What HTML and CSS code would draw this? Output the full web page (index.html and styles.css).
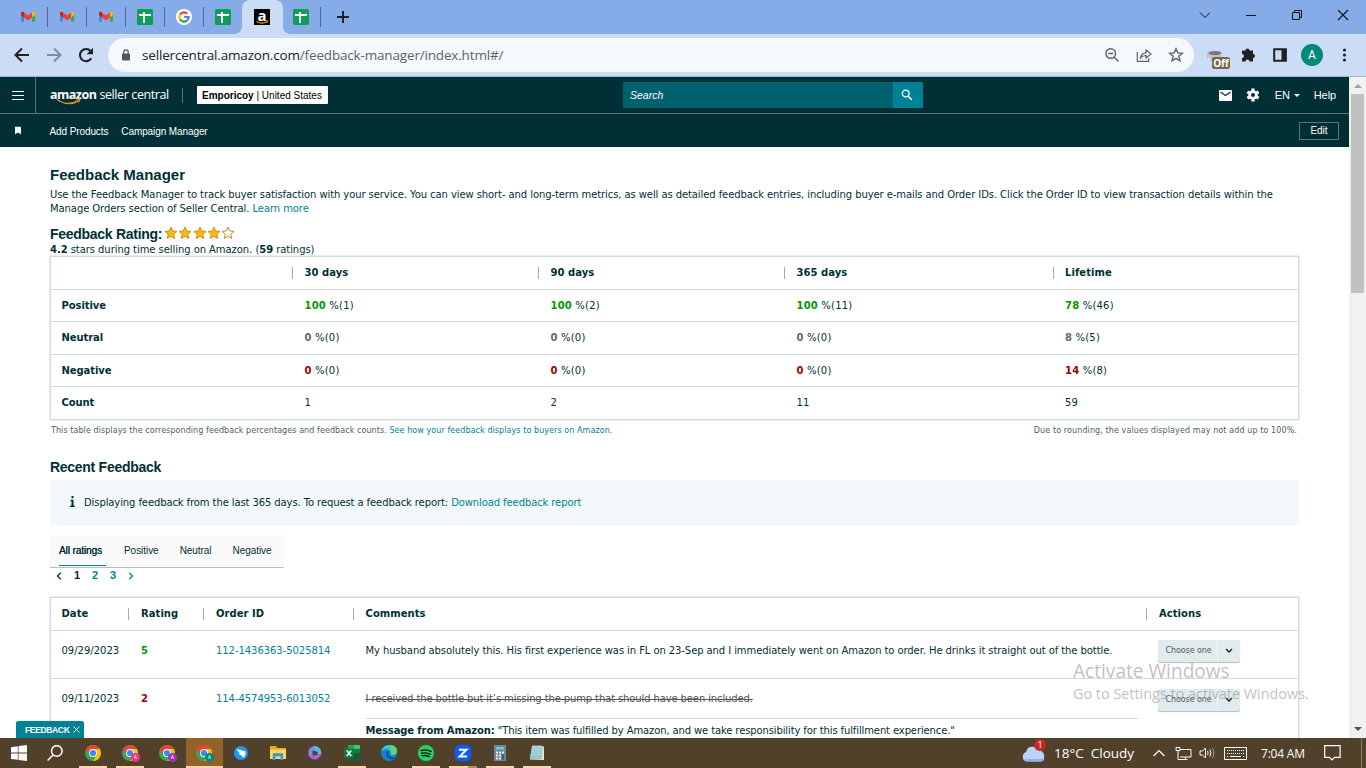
FILE: index.html
```html
<!DOCTYPE html>
<html lang="en">
<head>
<meta charset="utf-8">
<title>Feedback Manager</title>
<link rel="stylesheet" href="styles.css">
</head>
<body>
<svg class="defs" width="0" height="0">
  <symbol id="gmail" viewBox="0 0 16 16"><path d="M1 3.500v9.200h3V7z" fill="#4285f4"/><path d="M15 3.500v9.200h-3V7z" fill="#34a853"/><path d="M12 4.200 13 3q2-1 2 1.500V6l-3 2.500z" fill="#fbbc04"/><path d="M1 6V4q.3-2 2.300-1L8 6.500 12 3.600v4.800l-4 3-4-3z" fill="#ea4335"/><path d="M1 6V4q.3-2 2.300-1L4 3.600v4.800z" fill="#c5221f"/></symbol>
  <symbol id="sheet" viewBox="0 0 16 16"><rect width="16" height="16" rx="1.500" fill="#0f9d58"/><path d="M2 6h12M7 3v11" stroke="#fff" stroke-width="2"/></symbol>
  <symbol id="google" viewBox="0 0 16 16"><circle cx="8" cy="8" r="8" fill="#fff"/><g fill="none" stroke-width="2.200"><path d="M11.300 4.600A4.700 4.700 0 0 0 4 5.600" stroke="#ea4335"/><path d="M4 5.600a4.700 4.700 0 0 0 0 4.800" stroke="#fbbc05"/><path d="M4 10.400a4.700 4.700 0 0 0 7.200 1" stroke="#34a853"/><path d="M11.200 11.400A4.700 4.700 0 0 0 12.700 8H8.200" stroke="#4285f4"/></g></symbol>
  <symbol id="chrome" viewBox="0 0 16 16"><circle cx="8" cy="8" r="8" fill="#34a853"/><path d="M1.100 4A8 8 0 0 1 14.900 4H8L4.500 10z" fill="#ea4335"/><path d="M8 4h6.900A8 8 0 0 1 8 16l3.500-6z" fill="#fbbc05"/><circle cx="8" cy="8" r="4" fill="#fff"/><circle cx="8" cy="8" r="3.100" fill="#4285f4"/></symbol>
  <symbol id="star" viewBox="0 0 14 14"><path d="M7 1l1.700 4 4.300.4-3.200 2.900.9 4.200L7 10.300l-3.700 2.200.9-4.200L1 5.400 5.300 5z" stroke="#cf8d1a" stroke-width="1" stroke-linejoin="round"/></symbol>
</svg>

<header class="tabstrip">
  <div class="tab"><svg><use href="#gmail"/></svg></div>
  <div class="tab"><svg><use href="#gmail"/></svg></div>
  <div class="tab"><svg><use href="#gmail"/></svg></div>
  <div class="tab"><svg><use href="#sheet"/></svg></div>
  <div class="tab"><svg><use href="#google"/></svg></div>
  <div class="tab last"><svg><use href="#sheet"/></svg></div>
  <div class="tab active"><span class="a-icon">a<svg viewBox="0 0 16 16"><path d="M2.500 12.400q5.500 3.200 10 .4M11.500 12.300l2-.3-.5 1.700" fill="none" stroke="#f90" stroke-width="1.200"/></svg></span></div>
  <div class="tab"><svg><use href="#sheet"/></svg></div>
  <svg class="plus" viewBox="0 0 14 14"><path d="M7 1v12M1 7h12" stroke="#202124" stroke-width="2"/></svg>
  <div class="window-buttons">
    <svg viewBox="0 0 12 12"><path d="M1 3.500l5 5 5-5" fill="none" stroke="#111"/></svg>
    <svg viewBox="0 0 12 12"><path d="M1 6.500h10" stroke="#111"/></svg>
    <svg viewBox="0 0 12 12"><path d="M1.500 3.500h7v7h-7zM3.500 3.500v-2h7v7h-2" fill="none" stroke="#111"/></svg>
    <svg viewBox="0 0 12 12"><path d="M1 1l10 10M11 1L1 11" stroke="#111" stroke-width="1.100"/></svg>
  </div>
</header>

<div class="toolbar">
  <div class="nav-buttons">
    <svg viewBox="0 0 20 20"><path d="M17 10H4M10 3.500L3.500 10l6.500 6.500" fill="none" stroke="#202124" stroke-width="2"/></svg>
    <svg viewBox="0 0 20 20"><path d="M3 10h13M10 3.500l6.500 6.500-6.500 6.500" fill="none" stroke="#858b99" stroke-width="2"/></svg>
    <svg viewBox="0 0 20 20"><path d="M15.300 13.300A6.100 6.100 0 1 1 14.600 6" fill="none" stroke="#202124" stroke-width="2.100"/><path d="M17 2.800v6.400h-6.400z" fill="#202124"/></svg>
  </div>
  <div class="omnibox">
    <svg class="lock" viewBox="0 0 10 12"><rect x="1" y="4.500" width="8" height="7" rx="1" fill="#50555b"/><path d="M2.800 5V3a2.200 2.200 0 0 1 4.400 0v2" fill="none" stroke="#50555b" stroke-width="1.200"/></svg>
    <span class="url">sellercentral.amazon.com<i>/feedback-manager/index.html#/</i></span>
    <div class="omni-icons">
      <svg viewBox="0 0 16 16" fill="none" stroke="#5f6368" stroke-width="1.400"><circle cx="6.700" cy="6.500" r="4.800"/><path d="M10.300 10.200L14.500 14.500M4.300 6.500h4.800"/></svg>
      <svg viewBox="0 0 16 16" fill="none" stroke="#5f6368" stroke-width="1.200"><path d="M1.300 5v9.300h11.400V11"/><path d="M4.500 11Q5 6 10 5.800V3l5 4-5 4V8.500Q6.500 8.300 4.500 11z"/></svg>
      <svg viewBox="0 0 16 16" fill="none" stroke="#5f6368" stroke-width="1.400"><path d="M8 1.800l1.800 4.100 4.600.4-3.500 3 1.100 4.500L8 11.400l-4 2.400 1.100-4.500-3.500-3 4.600-.4z"/></svg>
    </div>
  </div>
  <div class="extensions">
    <div class="ext"><svg viewBox="0 0 20 20"><path d="M2 6q6-3 15 0l-1 3-1 5H6L4.500 9 2 12z" fill="#c2c3c7"/><ellipse cx="10" cy="6" rx="6.500" ry="2" fill="#777"/></svg><b>Off</b></div>
    <svg viewBox="0 0 16 16" fill="#202124"><path d="M2 4h3.500a2 2 0 1 1 4 0H13v3.500a2 2 0 0 1 0 4V15H9.500a2 2 0 0 0-4 0H2v-3.500a2 2 0 0 0 0-4z" transform="translate(0 -.5)"/></svg>
    <svg viewBox="0 0 16 16"><path d="M2.200 2.200h11.600v11.600H2.200z" fill="none" stroke="#202124" stroke-width="2"/><path d="M9.500 2h5v12h-5z" fill="#202124"/></svg>
    <span class="avatar">A</span>
    <svg viewBox="0 0 16 16" fill="#202124"><circle cx="8.500" cy="3" r="1.600"/><circle cx="8.500" cy="8" r="1.600"/><circle cx="8.500" cy="13" r="1.600"/></svg>
  </div>
</div>

<div class="viewport">
<div class="page">
  <div class="sc-header">
    <div class="burger"><svg viewBox="0 0 12 10"><path d="M0 1.500h12M0 5.500h12M0 9.500h12" stroke="#fff" stroke-width="1"/></svg></div>
    <div class="logo"><b>amazon</b><span>seller central</span><svg viewBox="0 0 26 8"><path d="M1 1.500Q12 9 23 2.500" fill="none" stroke="#f0921e" stroke-width="1.500"/><path d="M20 1.300l4-.5-1.200 3.600" fill="none" stroke="#f0921e" stroke-width="1.100"/></svg></div>
    <div class="account"><b>Emporicoy</b> | United States</div>
    <div class="search"><span>Search</span><div><svg viewBox="0 0 12 12" fill="none" stroke="#fff"><circle cx="4.700" cy="4.500" r="3.400" stroke-width="1.300"/><path d="M7.200 7.200l3.600 3.600" stroke-width="1.600"/></svg></div></div>
    <div class="sc-right">
      <svg class="mail" viewBox="0 0 13 11"><rect width="13" height="11" rx="1" fill="#fff"/><path d="M1.500 2l5 3.500 5-3.500" fill="none" stroke="#002f36" stroke-width="1.200"/></svg>
      <svg class="gear" viewBox="0 0 14 14"><g stroke="#fff" stroke-width="3.200"><path d="M7 .5v13M1.400 3.800l11.200 6.400M12.600 3.800L1.400 10.200"/></g><circle cx="7" cy="7" r="4.700" fill="#fff"/><circle cx="7" cy="7" r="2" fill="#002f36"/></svg>
      <span class="lang">EN</span><i class="caret"></i><span class="help">Help</span>
    </div>
  </div>
  <nav class="sc-nav">
    <svg viewBox="0 0 7 9"><path d="M0 0h7v9L3.500 6.800 0 9z" fill="#fff"/></svg>
    <span class="n1">Add Products</span><span class="n2">Campaign Manager</span><button>Edit</button>
  </nav>

  <main>
    <h1>Feedback Manager</h1>
    <p class="intro"><span>Use the Feedback Manager to track buyer satisfaction with your service. You can view short- and long-term metrics, as well as detailed feedback entries, including buyer e-mails and Order IDs. Click the Order ID to view transaction details within the</span><br><span>Manage Orders section of Seller Central. <a>Learn more</a></span></p>
    <div class="rating"><h2>Feedback Rating:</h2><svg fill="#ffb90b"><use href="#star"/></svg><svg fill="#ffb90b"><use href="#star"/></svg><svg fill="#ffb90b"><use href="#star"/></svg><svg fill="#ffb90b"><use href="#star"/></svg><svg fill="#fff"><use href="#star"/></svg></div>
    <p class="stars"><b>4.2</b> stars during time selling on Amazon. (<b>59</b> ratings)</p>

    <section class="card summary">
      <div class="row head"><span></span><b>30 days</b><b>90 days</b><b>365 days</b><b>Lifetime</b></div>
      <div class="row pos short"><b>Positive</b><span><b>100</b> %(1)</span><span><b>100</b> %(2)</span><span><b>100</b> %(11)</span><span><b>78</b> %(46)</span></div>
      <div class="row neu"><b>Neutral</b><span><b>0</b> %(0)</span><span><b>0</b> %(0)</span><span><b>0</b> %(0)</span><span><b>8</b> %(5)</span></div>
      <div class="row neg short"><b>Negative</b><span><b>0</b> %(0)</span><span><b>0</b> %(0)</span><span><b>0</b> %(0)</span><span><b>14</b> %(8)</span></div>
      <div class="row short"><b>Count</b><span>1</span><span>2</span><span>11</span><span>59</span></div>
    </section>
    <div class="note"><span>This table displays the corresponding feedback percentages and feedback counts. <a>See how your feedback displays to buyers on Amazon.</a></span><span>Due to rounding, the values displayed may not add up to 100%.</span></div>

    <h2 class="recent">Recent Feedback</h2>
    <div class="info"><svg viewBox="0 0 5 11"><path d="M1.500 0h2v2.200h-2zM.5 3.800h3v5.700h1.200V11H.2V9.500h1.300V5.300h-1z" fill="#002f36"/></svg><span>Displaying feedback from the last 365 days. To request a feedback report: <a>Download feedback report</a></span></div>
    <div class="filters"><span class="on">All ratings</span><span>Positive</span><span>Neutral</span><span>Negative</span></div>
    <div class="pager"><svg viewBox="0 0 6 8"><path d="M4.800.7L1.500 4l3.300 3.300" fill="none" stroke="#002f36" stroke-width="1.300"/></svg><b>1</b><b class="lnk">2</b><b class="lnk">3</b><svg viewBox="0 0 6 8"><path d="M1.200.7L4.500 4 1.200 7.300" fill="none" stroke="#008296" stroke-width="1.300"/></svg></div>

    <section class="card entries">
      <div class="row head"><b>Date</b><b>Rating</b><b>Order ID</b><b>Comments</b><b>Actions</b></div>
      <div class="row entry pos"><span class="date">09/29/2023</span><span><b>5</b></span><a>112-1436363-5025814</a><span>My husband absolutely this. His first experience was in FL on 23-Sep and I immediately went on Amazon to order. He drinks it straight out of the bottle.</span>
        <div class="choose"><span>Choose one</span><svg viewBox="0 0 8 6"><path d="M1 1l3 3 3-3" fill="none" stroke="#002f36" stroke-width="1.400"/></svg></div></div>
      <div class="row entry tall neg"><span class="date">09/11/2023</span><span><b>2</b></span><a>114-4574953-6013052</a><div class="comment"><s>I received the bottle but it’s missing the pump that should have been included.</s><p><b>Message from Amazon:</b> "This item was fulfilled by Amazon, and we take responsibility for this fulfillment experience."</p></div>
        <div class="choose"><span>Choose one</span><svg viewBox="0 0 8 6"><path d="M1 1l3 3 3-3" fill="none" stroke="#002f36" stroke-width="1.400"/></svg></div></div>
    </section>
  </main>
</div>
<div class="scrollbar"><i class="up"></i><div class="thumb"></div><i class="down"></i></div>
</div>

<div class="feedback-tab"><span>FEEDBACK</span><svg viewBox="0 0 7 7"><path d="M.5.5l6 6M6.500.5l-6 6" stroke="#fff"/></svg></div>
<div class="watermark"><div>Activate Windows</div><p>Go to Settings to activate Windows.</p></div>

<footer class="taskbar">
  <div class="task"><svg viewBox="0 0 16 16" fill="#fff"><path d="M0 2.200L6.800 1.200v6.400H0zM7.500 1.100L16 0v7.600H7.500zM0 8.400h6.800v6.400L0 13.900zM7.500 8.400H16V16l-8.500-1.100z"/></svg></div>
  <div class="task"><svg viewBox="0 0 16 16" fill="none" stroke="#fff" stroke-width="1.500"><circle cx="9.800" cy="6" r="5.300"/><path d="M6 9.900L.6 15.500"/></svg></div>
  <div class="task run"><svg><use href="#chrome"/></svg></div>
  <div class="task run"><svg><use href="#chrome"/></svg><em class="pink">A</em></div>
  <div class="task"><svg><use href="#chrome"/></svg><em class="purple">A</em></div>
  <div class="task current"><svg><use href="#chrome"/></svg><em class="teal">A</em></div>
  <div class="task"><svg viewBox="0 0 16 16"><circle cx="8" cy="8" r="7" fill="#2196f3"/><path d="M3.500 4l8.800 2.300q.8 4-1.800 6.700L8.700 10.500 6.500 9.800 6.300 8z" fill="#fff"/></svg></div>
  <div class="task"><svg viewBox="0 0 16 16"><path d="M0 1h6l1.500 2H16v11H0z" fill="#e6a817"/><path d="M0 4.500h16V14H0z" fill="#ffd75e"/><path d="M2.800 15V8.300h10.400V15h-2.700v-3.800H5.500V15z" fill="#3d94d9"/></svg></div>
  <div class="task"><svg viewBox="0 0 16 16"><path d="M7 1Q1.500 3 1.500 6v4.500L5.500 11V6.500q2-1.500 4-5z" fill="#8a86e8"/><path d="M7 1q3-.6 5.500 2 2 2 2 5.500-.5 2.500-3.800 3.500V7Q8 6.500 6.800 5z" fill="#56b6ec"/><path d="M1.500 9q2 1.800 5 1.600 4-.4 8-2.100-.5 3-3 4.600-3 2.400-6 1Q1.500 12.500 1.500 9z" fill="#a566d0"/></svg></div>
  <div class="task run"><svg viewBox="0 0 16 16"><path d="M4 0h6v16H4z" fill="#21a366"/><path d="M10 0h6v4h-6z" fill="#33c481"/><path d="M10 4h6v4h-6zM4 4h6v4H4z" fill="#107c41"/><path d="M10 8h6v8H4V8z" fill="#185c37"/><rect y="3.500" width="10" height="9.500" rx="1" fill="#107c41"/><path d="M2.800 5.500l4.400 5.500M7.200 5.500L2.800 11" stroke="#fff" stroke-width="1.500"/></svg></div>
  <div class="task"><svg viewBox="0 0 16 16"><circle cx="8" cy="8" r="8" fill="#1480d0"/><path d="M.2 6.500Q1.500 0 8 0q8 0 8 6.300-.5 3.800-5 3.700-2 0-1-2Q9 4.500 5.500 4.300 2 4.300.2 6.500z" fill="#36c5d8"/><path d="M9 .1q7 .6 7 6.300-.5 3.600-5 3.600-2 0-1-2z" fill="#5bd67a"/><path d="M5.600 7q-1 5.500 4.800 7.500 2.600 0 4.500-2.500Q10 13.500 7.500 10.500 6 8.500 8 6.300q-1.700-.2-2.400.7z" fill="#0c4b94"/></svg></div>
  <div class="task run"><svg viewBox="0 0 16 16"><circle cx="8" cy="8" r="8" fill="#1ed760"/><path d="M3 5.600q5.500-1.500 10.200 1M3.500 8.300q5-1.300 8.800 1M4 10.800q4-1 7.300.8" fill="none" stroke="#111" stroke-width="1.400" stroke-linecap="round"/></svg></div>
  <div class="task run split"><svg viewBox="0 0 16 16"><rect width="16" height="16" rx="4.500" fill="#0b5cff"/><path d="M4 4.700h7.500L4.700 11.400h7.300" fill="none" stroke="#fff" stroke-width="2"/></svg></div>
  <div class="task run"><svg viewBox="0 0 16 16"><rect x="2" width="12" height="16" fill="#78828c"/><path d="M4 2h8v2.500H4z" fill="#52d3f5"/><path d="M4 6.500h2v2H4zM7 6.500h2v2H7zM10 6.500h2v2h-2zM4 9.500h2v2H4zM7 9.500h2v2H7zM4 12.500h2v2H4zM7 12.500h2v2H7z" fill="#eee"/><path d="M10 9.500h2v5h-2z" fill="#1565a8"/></svg></div>
  <div class="task run"><svg viewBox="0 0 16 16"><path d="M3 1.500h12V15l-14-.5z" fill="#e9e2c5"/><path d="M3 1.500h11l-1.500 12.500H.8z" fill="#8fc7d0"/><path d="M3 4.500h10M2.500 7h10M2.200 9.500h10" stroke="#b9e2e6" stroke-width=".8"/><path d="M4 .3v2.500M6 .3v2.500M8 .3v2.500M10 .3v2.500M12 .3v2.500" stroke="#e8eeee"/></svg></div>
  <div class="tray">
    <div class="cloud"><svg viewBox="0 0 26 18"><path d="M5.500 17.500a5 5 0 0 1-.5-9.500 6.500 6.500 0 0 1 12.300-1.500A5.800 5.800 0 0 1 20 17.500z" fill="#bcd3f8"/><path d="M5.500 17.500a5 5 0 0 1-3-2.500h21a5 5 0 0 1-3.500 2.500z" fill="#8db2ee"/></svg><em>1</em></div>
    <span class="weather">18°C&nbsp; Cloudy</span>
    <svg class="chev" viewBox="0 0 12 8"><path d="M.6 7L6 1.500 11.400 7" fill="none" stroke="#fff" stroke-width="1.200"/></svg>
    <svg class="net" viewBox="0 0 17 15"><path d="M5 3.500h11v7.500H5M10.500 11v2.500M4.500 13.500h8M1 1.500h4v3H1zM3 4.500v9h2" fill="none" stroke="#fff"/></svg>
    <svg class="vol" viewBox="0 0 17 14" fill="none" stroke="#fff"><path d="M1 5h2.500l3-3v10l-3-3H1zM8.500 5q1.300 2 0 4M10.800 3.500q2.400 3.500 0 7"/><path d="M13.300 2q3.300 5 0 10" opacity=".5"/></svg>
    <svg class="kbd" viewBox="0 0 23 13"><path d="M.5.5h22v12H.5z" fill="none" stroke="#fff"/><path d="M3 3.500h17M3 6.500h17" stroke="#fff" stroke-dasharray="1 1"/><path d="M6 9.500h11M3 9.500h1M19 9.500h1" stroke="#fff"/></svg>
    <span class="clock">7:04 AM</span>
    <svg class="msg" viewBox="0 0 17 16"><path d="M.7.700h15.400v11.600H10.500l-2.500 2.500-2.500-2.500H.7z" fill="none" stroke="#fff" stroke-width="1.200"/></svg>
    <i class="peek"></i>
  </div>
</footer>
</body>
</html>
```
FILE: styles.css
```css
* { box-sizing: border-box; }
body { margin: 0; width: 1366px; height: 768px; overflow: hidden; display: flex; flex-direction: column; position: relative; background: #fff; color: #002f36; font: 10px "DejaVu Sans", Verdana, sans-serif; white-space: nowrap; }
h1, h2, p { margin: 0; }
svg { display: block; flex: none; }
.defs { position: absolute; }
a { color: #008296; }

.tabstrip { height: 34px; flex: none; background: #85ace9; display: flex; align-items: center; padding-left: 9px; }
.tab { width: 39px; height: 34px; display: flex; align-items: center; justify-content: center; position: relative; padding-right: 1px; }
.tab svg { width: 16px; height: 16px; }
.tab::after { content: ""; position: absolute; right: 0; top: 7px; width: 1px; height: 20px; background: #536b93; }
.tab.last::after { display: none; }
.tab.active { width: 41px; margin: 0 -1px; background: #cbdcf6; border-radius: 8px 8px 0 0; }
.tab.active::before, .tab.active::after { content: ""; position: absolute; top: auto; right: auto; bottom: 0; left: -7px; width: 7px; height: 7px; background: radial-gradient(circle at 0 0, #85ace9 6.500px, #cbdcf6 7px); }
.tab.active::after { left: 41px; background: radial-gradient(circle at 100% 0, #85ace9 6.500px, #cbdcf6 7px); }
.a-icon { width: 16px; height: 16px; background: #000; color: #fff; font: bold 15px/12px "Open Sans", sans-serif; text-align: center; position: relative; }
.a-icon svg { position: absolute; left: 0; top: 0; }
.plus { width: 14px; height: 14px; margin-left: 15px; }
.window-buttons { margin-left: auto; display: flex; gap: 34px; padding-right: 17px; margin-top: -5px; }
.window-buttons svg { width: 12px; height: 12px; }

.toolbar { height: 43px; flex: none; background: #cbdcf6; border-bottom: 1px solid #a5b5d1; display: flex; align-items: center; }
.nav-buttons { width: 108px; display: flex; gap: 12px; padding-left: 12px; }
.nav-buttons svg { width: 20px; height: 20px; }
.omnibox { width: 1086px; height: 34px; border-radius: 17px; background: #f5f8fd; display: flex; align-items: center; padding: 0 2px 0 13px; }
.lock { width: 10px; height: 12px; margin-right: 11px; }
.url { font: 13.500px "Open Sans", sans-serif; color: #202124; letter-spacing: -.17px; }
.url i { font-style: normal; color: #5f6368; }
.omni-icons { margin-left: auto; display: flex; }
.omni-icons svg { width: 16px; height: 16px; margin: 0 8px; }
.extensions { margin-left: auto; padding-right: 6px; display: flex; align-items: center; }
.extensions svg { width: 16px; height: 16px; margin: 0 8px; }
.ext { width: 32px; height: 24px; position: relative; }
.ext svg { width: 20px; height: 20px; margin: 4px 5px; }
.ext b { position: absolute; left: 12px; top: 14px; width: 18px; height: 12px; border-radius: 2px; background: #7d674a; color: #fff; font: bold 10px/12px "Open Sans", sans-serif; text-align: center; }
.avatar { width: 22px; height: 22px; margin: 0 5px; border-radius: 50%; background: #00897b; color: #fff; font: 12px/22px Roboto, sans-serif; text-align: center; }

.viewport { height: 661px; flex: none; display: flex; }
.page { width: 1349px; overflow: hidden; }
.sc-header { height: 37px; background: #002f36; border-bottom: 1px solid #5a757a; color: #fff; display: flex; align-items: center; font-family: "Liberation Sans", Arial, sans-serif; }
.burger { width: 36px; height: 36px; border-right: 1px solid #5a757a; padding: 13px 0 0 12px; }
.burger svg { width: 12px; height: 10px; }
.logo { width: 147px; height: 20px; position: relative; padding-left: 14px; font: 12.500px/19px "Open Sans", sans-serif; display: flex; gap: 3px; }
.logo b { letter-spacing: -.5px; }
.logo span { letter-spacing: -.4px; }
.logo::after { content: ""; position: absolute; right: 0; top: 3px; height: 15px; width: 1px; background: #5a757a; }
.logo svg { position: absolute; left: 20px; top: 13px; width: 26px; height: 8px; }
.account { width: 131px; height: 18px; margin-left: 14px; border-radius: 1px; background: #fff; color: #000; font-size: 10px; line-height: 19px; padding-left: 5px; }
.search { margin-left: 295px; width: 300px; height: 26px; background: #00616e; display: flex; align-items: center; justify-content: space-between; padding-left: 7px; font-size: 10.500px; font-style: italic; }
.search div { width: 30px; height: 26px; background: #008296; padding: 7px 8px; }
.search svg { width: 12px; height: 12px; }
.sc-right { margin-left: auto; padding-right: 13px; display: flex; align-items: center; font-size: 11px; letter-spacing: -.1px; }
.mail { width: 13px; height: 11px; margin-right: 14px; }
.gear { width: 14px; height: 14px; margin-right: 15px; }
.caret { border: 3px solid transparent; border-top-color: #fff; margin: 3px 14px 0 4px; }
.sc-nav { height: 33px; background: #002f36; color: #fff; display: flex; align-items: center; font: 10px "Liberation Sans", Arial, sans-serif; padding: 0 10px 0 15px; letter-spacing: -.1px; }
.sc-nav svg { width: 6px; height: 9px; margin-right: 28.500px; }
.sc-nav span { padding-top: 2px; }
.n1 { margin-right: 13px; }
.sc-nav button { margin-left: auto; width: 40px; height: 18px; padding: 0; border: 1px solid #5a757a; background: none; color: #fff; font: inherit; }

main { padding: 19px 50px 0; letter-spacing: -.085px; }
h1, h2 { font: bold 14px/18px "Liberation Sans", Arial, sans-serif; letter-spacing: -.28px; }
h1 { font-size: 15px; letter-spacing: 0; }
.intro { line-height: 14px; margin-top: 4px; }
.rating { display: flex; height: 18px; margin-top: 9px; align-items: center; }
.rating h2 { width: 114px; }
.rating svg { width: 14px; height: 14px; margin: -2px .3px 0 0; }
.stars { line-height: 12px; margin-top: 1px; letter-spacing: -.06px; }
.card { width: 1249px; border: 1px solid #d5dbdb; box-shadow: 0 0 2px #c8cece; }
.row { display: grid; align-items: center; }
.summary { height: 164px; }
.summary .row { grid-template-columns: 253.500px 246px 246px 268.500px 1fr; height: 33px; border-bottom: 1px solid #d5dbdb; padding-bottom: 1px; }
.summary .row.short { height: 32px; padding-bottom: 0; }
.summary .row:last-child { border: 0; padding-bottom: 1px; }
.row > :first-child { padding-left: 10.500px; }
.head b { position: relative; letter-spacing: .05px; }
.head b:not(:first-child)::before { content: ""; position: absolute; left: -12.500px; top: 0; width: 1px; height: 12px; background: #a2afb1; }
.entries .head b:not(:first-child)::before { left: -13px; }
.summary .row > span { letter-spacing: .2px; }
.pos span b { color: #090; }
.neu span b { color: #666; }
.neg span b { color: #900; }
.note { height: 20px; display: flex; justify-content: space-between; font-size: 8px; line-height: 21px; padding: 0 2px 0 1px; letter-spacing: .075px; color: #4b5f63; }
.note span + span { letter-spacing: .1px; }
.recent { margin-top: 18px; }
.info { height: 45px; margin-top: 4px; width: 1249px; background: #f3f8fa; display: flex; align-items: center; padding-left: 20px; letter-spacing: -.1px; }
.info svg { width: 5px; height: 11px; margin-right: 9px; margin-top: -2px; }
.filters { width: 234px; height: 33px; margin-top: 10px; background: #fafafa; border-bottom: 1px solid #bbbfbf; display: flex; padding-left: 9px; font: 10px/31px "Liberation Sans", Arial, sans-serif; }
.filters span { margin-right: 21px; flex: none; letter-spacing: -.05px; }
.filters .on { width: 47px; height: 31px; margin-right: 18px; border-bottom: 1px solid #008296; text-shadow: .3px 0 #002f36; letter-spacing: -.1px; }
.pager { height: 16px; display: flex; align-items: center; padding-left: 6px; font: bold 11px "Liberation Sans", Arial, sans-serif; padding-bottom: 2px; }
.pager svg { width: 6px; height: 8px; margin-top: 2px; }
.pager b { width: 6px; margin-left: 12px; }
.pager svg:last-child { margin-left: 12px; }
.lnk { color: #008296; }
.entries { margin-top: 13px; height: 170px; }
.entries .row { grid-template-columns: 90px 75px 149.500px 793.500px 1fr; border-bottom: 1px solid #d5dbdb; }
.entries .head { height: 33px; padding-bottom: 1px; }
.entries .entry { height: 48px; padding-bottom: 8px; }
.entries .entry.tall { height: 120px; align-items: start; padding-top: 14px; }
.entry .date { letter-spacing: 0; }
.entry > a { letter-spacing: -.05px; }
.choose { margin: 1px 0 0 -1.500px; width: 82px; height: 22px; background: #e1eaec; border-radius: 2px; box-shadow: 0 1px 1px #b4bcbe; display: flex; align-items: center; color: #4c6168; font-size: 8px; }
.tall .choose { margin-top: -4px; }
.choose span { width: 60px; height: 22px; line-height: 22px; padding-left: 8px; border-right: 1px solid #f2f7f8; }
.choose svg { width: 8px; height: 6px; margin-left: 7px; }
.comment { letter-spacing: -.12px; }
.comment s { color: #555; }
.comment p { width: 772px; margin-top: 14px; padding-top: 6px; border-top: 1px solid #d5dbdb; }
.scrollbar { width: 17px; background: #f1f1f1; display: flex; flex-direction: column; align-items: center; padding: 3px 0; }
.up { border: 4px solid transparent; border-bottom: 4px solid #a3a3a3; margin-bottom: 6px; }
.thumb { width: 13px; height: 199px; background: #c1c1c1; }
.down { border: 4px solid transparent; border-top: 4px solid #505050; margin-top: auto; }

.feedback-tab { position: absolute; left: 16px; top: 721px; width: 68px; height: 17px; background: #008296; border-radius: 3px 3px 0 0; box-shadow: 0 0 1px #888; color: #fff; font: bold 8.500px "Liberation Sans", Arial, sans-serif; letter-spacing: -.35px; display: flex; align-items: center; padding-left: 9px; gap: 4px; }
.feedback-tab svg { width: 7px; height: 7px; }
.watermark { position: absolute; left: 1073px; top: 659px; color: rgba(130,130,130,.5); font: 14.400px "Open Sans", sans-serif; }
.watermark div { font-size: 19.100px; line-height: 24px; }
.watermark p { line-height: 22px; }

.taskbar { height: 30px; flex: none; background: #52412a; display: flex; }
.task { width: 37px; height: 30px; flex: none; position: relative; display: flex; align-items: center; justify-content: center; }
.task:nth-child(2) { width: 38px; padding-right: 2px; }
.task svg { width: 16px; height: 16px; }
.run::after { content: ""; position: absolute; left: 4px; bottom: 0; width: 28px; height: 2px; background: #ffd5ad; }
.run.split::after { background: linear-gradient(90deg, #ffd5ad 19px, #a98f77 19px); }
.task:nth-child(n+3) { padding-right: 1px; }
.current { background: #93622b; border-bottom: 2px solid #ffd5ad; padding-top: 2px; }
.task em { position: absolute; left: 19px; top: 15px; width: 9px; height: 9px; border-radius: 50%; color: #fff; font: 5px/9px Roboto, sans-serif; text-align: center; }
.pink { background: #f0347c; }
.purple { background: #9b35b5; }
.teal { background: #00897b; }
.tray { margin-left: auto; display: flex; align-items: center; color: #fff; font: 12px "Open Sans", sans-serif; }
.cloud { position: relative; width: 33px; }
.cloud svg { width: 26px; height: 18px; }
.cloud em { position: absolute; left: 13px; top: -5px; width: 12px; height: 12px; border-radius: 50%; background: #c42b1c; font: 9px/12px "Open Sans", sans-serif; text-align: center; }
.weather { width: 99px; font-size: 13.500px; }
.chev { width: 12px; height: 8px; margin-right: 10px; }
.net { width: 17px; height: 15px; margin-right: 7px; }
.vol { width: 17px; height: 14px; margin-right: 8px; }
.kbd { width: 23px; height: 13px; margin-right: 14px; }
.clock { width: 63px; letter-spacing: -.2px; }
.msg { width: 17px; height: 16px; margin-right: 20px; }
.peek { width: 1px; height: 30px; background: #8a7d6b; margin-right: 4px; }
```
